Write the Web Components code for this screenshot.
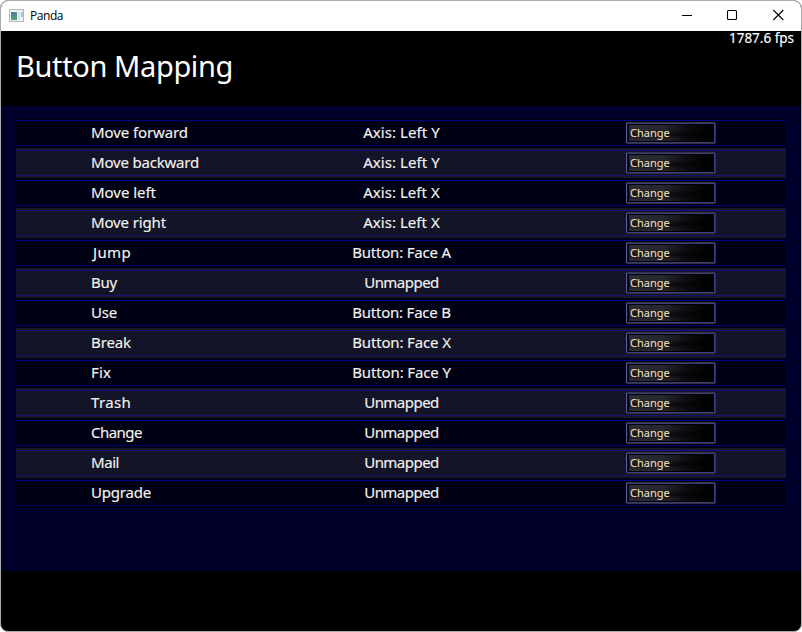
<!DOCTYPE html>
<html lang="en"><head><meta charset="utf-8"><title>Panda</title>
<style>html,body{margin:0;background:#fff;overflow:hidden}</style></head>
<body><panda-window></panda-window>
<script>
const attach = (el, html) => { const r = el.attachShadow({mode:'open'}); const t = document.createElement('template'); t.innerHTML = html; r.append(t.content.cloneNode(true)); return r; };

/* A label whose tracking is adjusted so that it spans the given width. */
customElements.define('fit-label', class extends HTMLElement {
  connectedCallback() {
    if (this.shadowRoot) return;
    const r = attach(this, `<style>:host{display:inline-block;white-space:nowrap}span{display:inline-block}</style><span><slot></slot></span>`);
    const s = r.querySelector('span'), w = +this.getAttribute('span');
    const n = this.textContent.length;
    if (w) s.style.letterSpacing = ((w - s.getBoundingClientRect().width) / n) + 'px';
  }
});

customElements.define('title-bar', class extends HTMLElement {
  connectedCallback() {
    attach(this, `<style>
:host{display:flex;align-items:center;height:30px;box-sizing:border-box;padding-left:8px;background:#fff;color:#000;font:12px "Open Sans","Noto Sans",sans-serif}
.t{margin-left:6px;flex:1;line-height:28px}
.c{width:46px;height:30px;display:block;flex:none}
</style>
<svg width="15" height="13" viewBox="0 0 15 13" style="margin-top:-2px"><defs><linearGradient id="g" x2="0.4" y2="1"><stop stop-color="#4b78a5"/><stop offset="1" stop-color="#4fa27c"/></linearGradient></defs><rect x=".5" y=".5" width="14" height="12" fill="#f0f2f4" stroke="#b2b6bb"/><rect x="2" y="3" width="6" height="8" fill="url(#g)"/><rect x="9" y="3" width="2" height="8" fill="#dde1e5"/><rect x="12" y="3" width="2" height="5" fill="#a8c9c8"/></svg>
<span class="t"><fit-label span="33"><slot>Panda</slot></fit-label></span>
<svg class="c" viewBox="0 0 46 30"><path d="M19 14.5h10" stroke="#000" shape-rendering="crispEdges"/></svg>
<svg class="c" viewBox="0 0 46 30"><rect x="18.500" y="9.500" width="9" height="9" rx="1" fill="none" stroke="#000" stroke-width="1.1"/></svg>
<svg class="c" viewBox="0 0 46 30"><path d="M18.300 9l10 10M28.300 9l-10 10" stroke="#000" stroke-width="1.1"/></svg>`);
  }
});

customElements.define('change-button', class extends HTMLElement {
  connectedCallback() {
    attach(this, `<style>
:host{display:block;box-sizing:border-box;width:90px;height:22px;border:1px solid #33333c;border-left-color:#5a5a9c;border-radius:2px;background:#000}
.b{height:20px;box-sizing:border-box;border:1px solid #3c3c84;border-left-color:#101018;padding:1px;}
.f{height:16px;box-sizing:border-box;padding-left:1px;background:linear-gradient(#0000 30%,#0009 58%,#0000 90%),linear-gradient(95deg,#2c2c35,#26262e 40%,#0d0d12 68%,#000 95%);color:#e8dcbc;font:11px/15px "Noto Sans",sans-serif}
</style><div class="b"><div class="f"><fit-label span="38"><slot></slot></fit-label></div></div>`);
  }
});

customElements.define('mapping-row', class extends HTMLElement {
  connectedCallback() {
    const [a, aw, b, bw] = this.dataset.v.split('|');
    attach(this, `<style>
:host{display:grid;grid-template-columns:257px 257px 257px;align-items:center;height:30px;box-sizing:border-box;padding-bottom:1px;color:#f2f2ec;font:15px/20px "Noto Sans",sans-serif;-webkit-text-stroke:.15px;
background:linear-gradient(#00001a 2px,#000082 2px 3px,#000014 3px 27px,#00006a 27px 28px,#000018 28px)}
:host(.alt){background:linear-gradient(#171725 2px,#121284 2px 3px,#141428 3px 27px,#14146c 27px 28px,#171728 28px)}
.n,.m{margin-top:-1px}.n{padding-left:75px}.m{text-align:center}.b{padding-left:96px}change-button{margin-top:1px}
</style><div class="n"${a==='Jump'?' style="padding-left:77px"':''}><fit-label span="${aw-1}">${a}</fit-label></div><div class="m"><fit-label span="${bw-1.4}">${b}</fit-label></div><div class="b"><change-button>Change</change-button></div>`);
  }
});

const rows = ['Move forward|98|Axis: Left Y|78','Move backward|109|Axis: Left Y|78','Move left|66|Axis: Left X|78','Move right|76|Axis: Left X|78','Jump|39|Button: Face A|100','Buy|27|Unmapped|76','Use|27|Button: Face B|100','Break|41|Button: Face X|100','Fix|21|Button: Face Y|100','Trash|41|Unmapped|76','Change|52|Unmapped|76','Mail|29|Unmapped|76','Upgrade|61|Unmapped|76'];

customElements.define('panda-window', class extends HTMLElement {
  connectedCallback() {
    attach(this, `<style>
:host{display:flex;flex-direction:column;width:802px;height:632px;box-sizing:border-box;border:1px solid #aaa;border-radius:8px;overflow:hidden;background:#000}
header{height:75px;box-sizing:border-box;display:flex;justify-content:space-between;color:#fff}
h1{margin:13px 0 0 15px;font:400 29px/44px "Noto Sans",sans-serif}
.fps{margin-right:7px;font:13.5px/15px "Noto Sans",sans-serif;-webkit-text-stroke:.15px}
main{height:465px;box-sizing:border-box;padding:12px 15px;background:#00002c}
mapping-row{width:770px}
</style><title-bar>Panda</title-bar>
<header><h1><fit-label span="217">Button Mapping</fit-label></h1><div class="fps"><fit-label span="65">1787.6 fps</fit-label></div></header>
<main>${rows.map((v,i)=>`<mapping-row data-v="${v}"${i%2?' class="alt"':''}></mapping-row>`).join('')}</main>`);
  }
});
</script></body></html>
